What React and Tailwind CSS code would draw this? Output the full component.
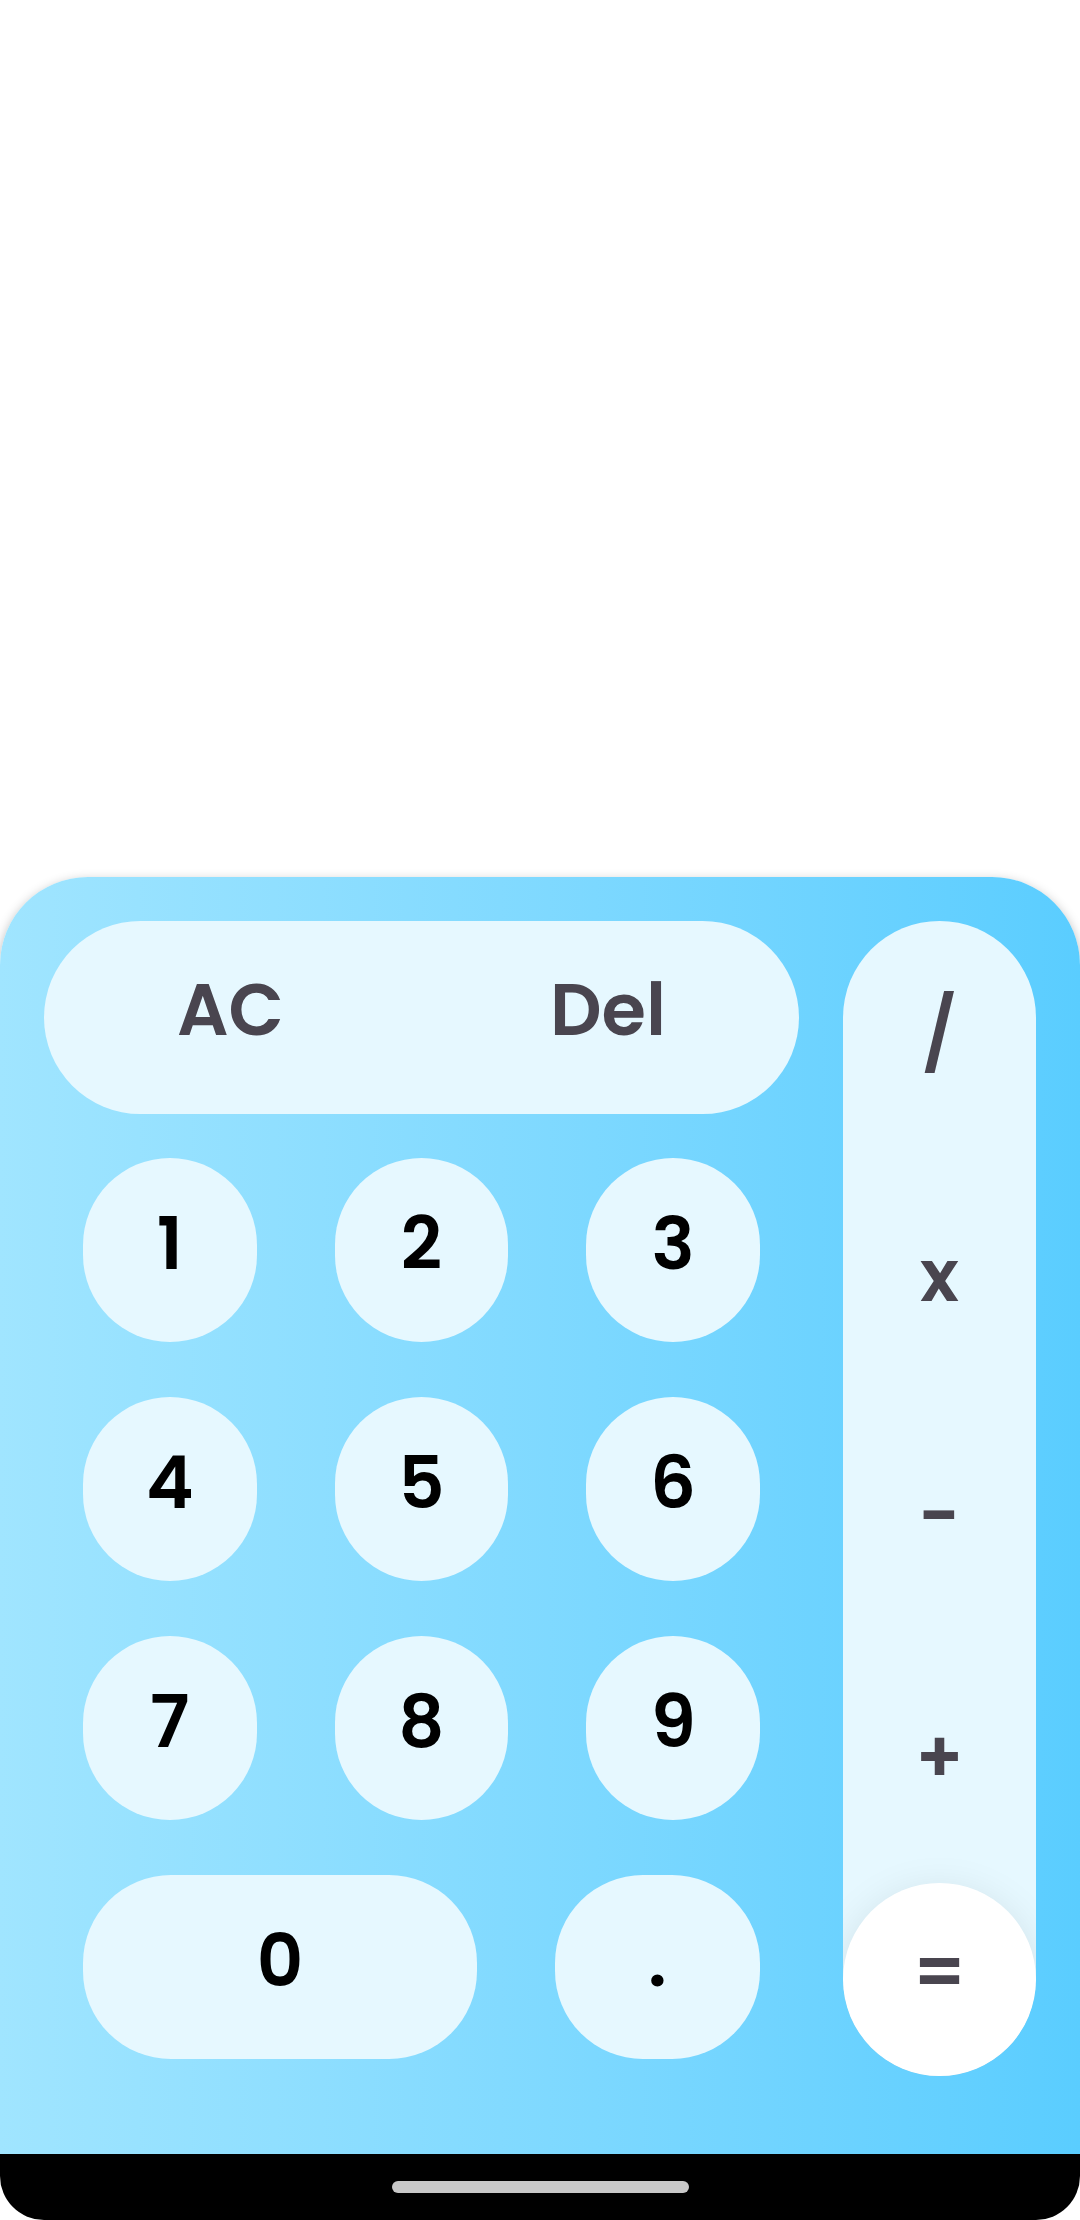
import { useState } from "react";

const digitRows = [
  ["1", "2", "3"],
  ["4", "5", "6"],
  ["7", "8", "9"],
];

const operators = ["/", "x", "-", "+"];

function Digit({ value, onPress }) {
  return (
    <button
      type="button"
      onClick={() => onPress(value)}
      className="flex h-[184px] w-full items-center justify-center rounded-[88px] bg-[#e6f8ff] pb-3 text-black"
    >
      {value}
    </button>
  );
}

function evaluate(expression) {
  const tokens = expression.match(/\d*\.?\d+|[-+x/]/g) || [];
  const terms = [];
  let sign = 1;
  for (let i = 0; i < tokens.length; i += 1) {
    const token = tokens[i];
    if (token === "+") sign = 1;
    else if (token === "-") sign = -1;
    else if (token === "x" && terms.length) terms.push(terms.pop() * Number(tokens[++i]));
    else if (token === "/" && terms.length) terms.push(terms.pop() / Number(tokens[++i]));
    else terms.push(sign * Number(token));
  }
  return terms.length ? String(terms.reduce((sum, term) => sum + term, 0)) : "";
}

export default function App() {
  const [expression, setExpression] = useState("");
  const append = (value) => setExpression((current) => current + value);

  return (
    <div className="flex min-h-screen flex-col bg-white font-['Poppins','Inter',sans-serif] text-7xl leading-none font-semibold">
      <output aria-label="Result" className="flex flex-1 items-end justify-end p-11 break-all">
        {expression}
      </output>

      <main className="flex gap-11 rounded-t-[88px] bg-linear-to-r from-[#a0e5ff] to-[#5acdff] px-11 pt-11 pb-[78px] shadow-[0_4px_12px_rgba(0,0,0,0.3)]">
        <div className="flex min-w-0 flex-1 flex-col">
          <div className="flex h-[193px] items-center justify-around rounded-full bg-[#e6f8ff] pb-4 text-[#49454f]">
            <button type="button" onClick={() => setExpression("")}>
              AC
            </button>
            <button type="button" onClick={() => setExpression((current) => current.slice(0, -1))}>
              Del
            </button>
          </div>

          <div className="flex flex-col gap-[55px] pt-11">
            {digitRows.map((row) => (
              <div key={row[0]} className="grid grid-cols-3">
                {row.map((value) => (
                  <div key={value} className="px-[39px]">
                    <Digit value={value} onPress={append} />
                  </div>
                ))}
              </div>
            ))}
            <div className="grid grid-cols-[5fr_3fr]">
              <div className="px-[39px]">
                <Digit value="0" onPress={append} />
              </div>
              <div className="px-[39px]">
                <Digit value="." onPress={append} />
              </div>
            </div>
          </div>
        </div>

        <div className="flex h-[1155px] w-[193px] flex-col overflow-hidden rounded-full bg-[#e6f8ff] text-[#49454f]">
          {operators.map((value) => (
            <button
              key={value}
              type="button"
              onClick={() => append(value)}
              className="flex flex-1 items-center justify-center pb-3"
            >
              {value}
            </button>
          ))}
          <button
            type="button"
            onClick={() => setExpression(evaluate)}
            className="flex h-[193px] items-center justify-center rounded-full bg-white pb-4 shadow-[0_8px_40px_rgba(0,0,0,0.1)]"
          >
            =
          </button>
        </div>
      </main>

      <footer className="flex h-[66px] items-center justify-center rounded-b-[44px] bg-black">
        <div className="h-3 w-[297px] rounded-full bg-[#c8c8c8]" />
      </footer>
    </div>
  );
}
